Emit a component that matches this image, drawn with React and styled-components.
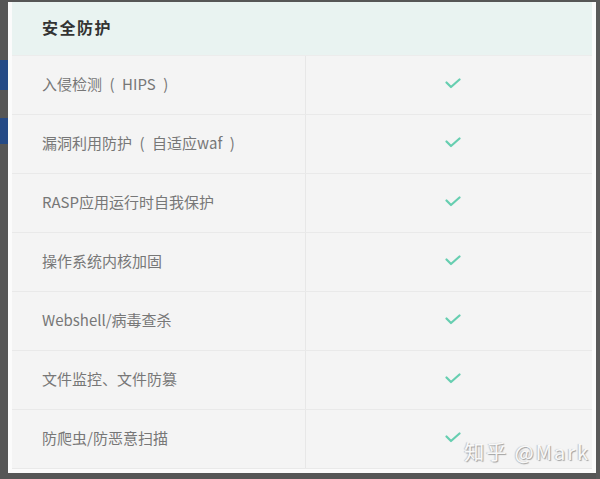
import React from 'react';
import styled, { createGlobalStyle } from 'styled-components';

const Global = createGlobalStyle`
  html, body {
    margin: 0;
    padding: 0;
    background: #555555;
    overflow: hidden;
  }
  body {
    font-family: "Noto Sans CJK SC", "Noto Sans", Arial, sans-serif;
  }
`;

const Screen = styled.div`
  position: relative;
  width: 600px;
  height: 479px;
  display: flex;
  background: #565656;
`;

const Backdrop = styled.div`
  width: 8px;
  display: flex;
  flex-direction: column;
  padding-top: 60px;
  gap: 28px;
`;

const BlueTab = styled.div`
  height: ${p => p.h}px;
  background: #254a86;
`;

const Panel = styled.div`
  width: 588px;
  margin-top: 2px;
  height: 471px;
  background: #fbfbfb;
  padding: 0 4px;
  box-sizing: border-box;
`;

const Header = styled.div`
  height: 49px;
  padding-bottom: 4px;
  background: #e9f3f1;
  border-bottom: 1px solid #ececec;
  display: flex;
  align-items: center;
  padding-left: 30px;
  font-size: 16px;
  font-weight: 700;
  color: #333;
  letter-spacing: 1.5px;
`;

const Row = styled.div`
  height: 58px;
  display: grid;
  grid-template-columns: 294px 1fr;
  border-bottom: 1px solid #e9e9e9;
  background: #f4f4f4;
`;

const Label = styled.div`
  display: flex;
  align-items: center;
  padding: 0 0 4px 30px;
  font-size: 15px;
  color: #777;
  border-right: 1px solid #e7e7e7;
  white-space: pre;
`;

const Cell = styled.div`
  display: flex;
  align-items: center;
  justify-content: center;
  padding: 0 0 4px 8px;
`;

const Watermark = styled.div`
  position: absolute;
  right: 10px;
  bottom: 13px;
  font-size: 20px;
  color: rgba(255, 255, 255, 0.92);
  text-shadow: 1px 1px 1px #a0a0a0, -1px 0 1px #c4c4c4;
  letter-spacing: 2px;
`;

const Edge = styled.div`
  width: 4px;
  background: #5a5a5a;
`;

const Check = () => (
  <svg width="16" height="11" viewBox="0 0 16 11">
    <polyline
      points="1.5,4.5 6,9 14.5,1.5"
      fill="none"
      stroke="#66ceb0"
      strokeWidth="2.2"
      strokeLinecap="round"
      strokeLinejoin="round"
    />
  </svg>
);

const items = [
  '入侵检测\u2002(\u2002HIPS\u2002)',
  '漏洞利用防护\u2002(\u2002自适应waf\u2002)',
  'RASP应用运行时自我保护',
  '操作系统内核加固',
  'Webshell/病毒查杀',
  '文件监控、文件防篡',
  '防爬虫/防恶意扫描',
];

export default function App() {
  return (
    <>
      <Global />
      <Screen>
        <Backdrop>
          <BlueTab h={30} />
          <BlueTab h={26} />
        </Backdrop>
        <Panel>
          <Header>安全防护</Header>
          {items.map(t => (
            <Row key={t}>
              <Label>{t}</Label>
              <Cell>
                <Check />
              </Cell>
            </Row>
          ))}
        </Panel>
        <Edge />
        <Watermark>知乎 @Mark</Watermark>
      </Screen>
    </>
  );
}
